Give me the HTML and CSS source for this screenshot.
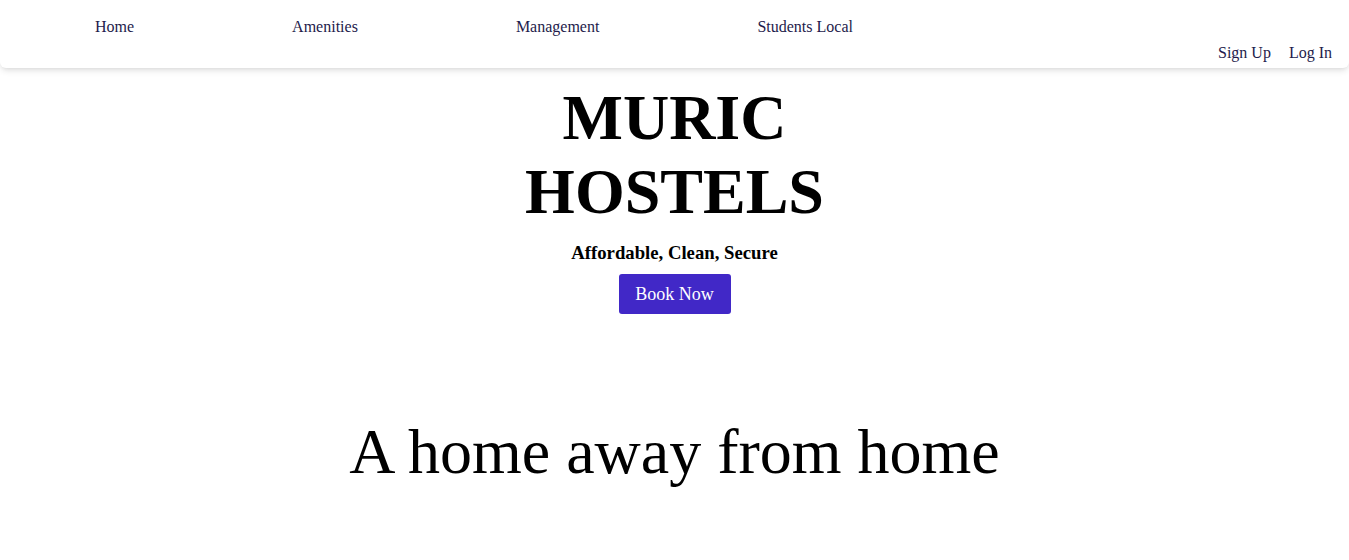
FILE: index.html
```html
<!DOCTYPE html>
<html lang="en">
<head>
<meta charset="utf-8">
<title>Muric Hostels</title>
<link rel="stylesheet" href="styles.css">
</head>
<body>
<header class="navbar">
  <nav class="nav-links">
    <a href="#">Home</a>
    <a href="#">Amenities</a>
    <a href="#">Management</a>
    <a href="#">Students Local</a>
  </nav>
  <div class="auth-links">
    <a href="#">Sign Up</a>
    <a href="#">Log In</a>
  </div>
</header>
<main class="hero">
  <h1 class="title">MURIC HOSTELS</h1>
  <h3 class="tagline">Affordable, Clean, Secure</h3>
  <button class="book-btn">Book Now</button>
  <h2 class="motto">A home away from home</h2>
</main>
</body>
</html>
```
FILE: styles.css
```css
* { box-sizing: border-box; }
html, body {
  margin: 0;
  padding: 0;
  background: #ffffff;
  font-family: "Liberation Serif", "Times New Roman", serif;
  color: #000;
}
.navbar {
  background: #fff;
  height: 68px;
  padding: 18px 17px 0 95px;
  box-shadow: 0 4px 6px -1px rgba(0,0,0,0.10), 0 2px 4px -2px rgba(0,0,0,0.08);
  border-radius: 0 0 6px 6px;
  display: flex;
  flex-direction: column;
  gap: 8px;
}
.nav-links {
  display: flex;
  gap: 158px;
  font-size: 16px;
}
.navbar a {
  color: #1e1b4b;
  text-decoration: none;
  font-size: 16px;
}
.auth-links {
  display: flex;
  justify-content: flex-end;
  gap: 18px;
}
.hero {
  display: flex;
  flex-direction: column;
  align-items: center;
  text-align: center;
}
.title {
  margin: 13px 0 0;
  font-size: 64px;
  font-weight: bold;
  max-width: 400px;
  line-height: normal;
}
.tagline {
  margin: 13px 0 0;
  font-size: 18.72px;
  font-weight: bold;
}
.book-btn {
  margin-top: 10px;
  height: 40px;
  width: 112px;
  background: #4128c7;
  color: #fff;
  border: none;
  border-radius: 3px;
  font-family: "Liberation Serif", "Times New Roman", serif;
  font-size: 18px;
  padding: 0;
  cursor: pointer;
}
.motto {
  margin: 101px 0 0;
  font-size: 64px;
  font-weight: normal;
  line-height: normal;
}
```
